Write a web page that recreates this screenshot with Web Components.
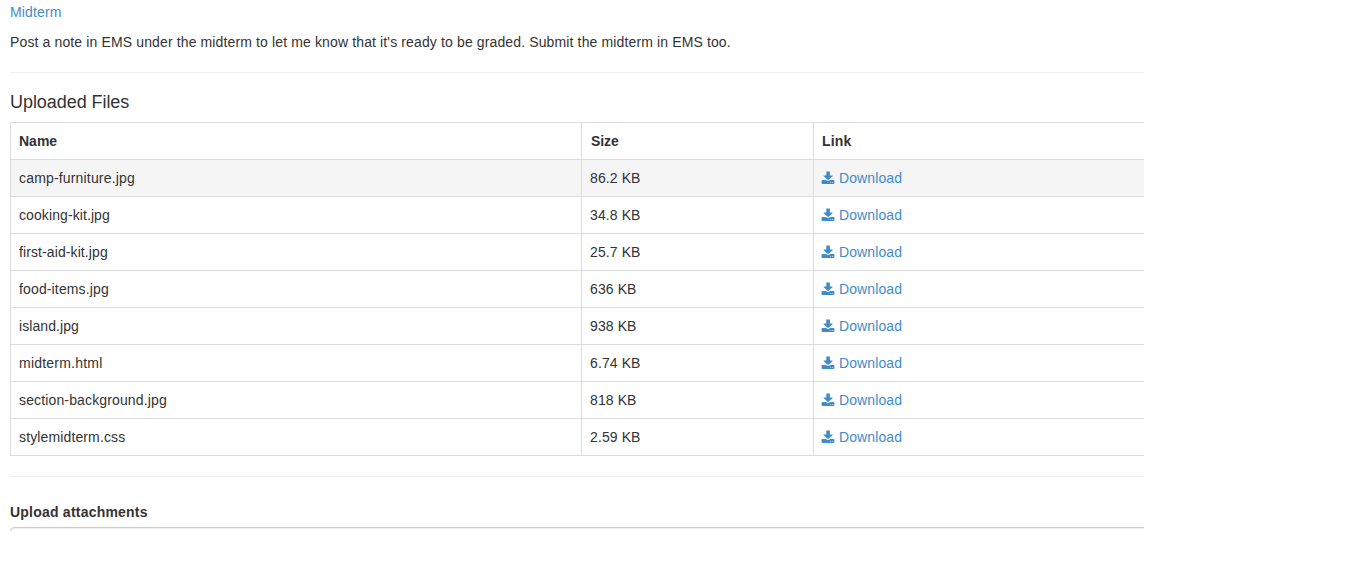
<!DOCTYPE html>
<html lang="en">
<head>
<meta charset="utf-8">
<title>Midterm</title>
<style>
html { background: #fff; }
body { margin: 0; font: 14px/20px "Liberation Sans", Arial, sans-serif; color: #333; }
</style>
</head>
<body>
<submission-page>
  <a slot="title">Midterm</a>
  <span slot="note">Post a note in EMS under the midterm to let me know that it's ready to be graded. Submit the midterm in EMS too.</span>
  <file-table>
    <file-row name="camp-furniture.jpg" size="86.2 KB" style="--tracking:.17px" active></file-row>
    <file-row name="cooking-kit.jpg" size="34.8 KB" style="--tracking:.09px"></file-row>
    <file-row name="first-aid-kit.jpg" size="25.7 KB" style="--tracking:.1px"></file-row>
    <file-row name="food-items.jpg" size="636 KB" style="--tracking:.14px"></file-row>
    <file-row name="island.jpg" size="938 KB" style="--tracking:.08px"></file-row>
    <file-row name="midterm.html" size="6.74 KB" style="--tracking:.22px"></file-row>
    <file-row name="section-background.jpg" size="818 KB" style="--tracking:.14px"></file-row>
    <file-row name="stylemidterm.css" size="2.59 KB" style="--tracking:.13px"></file-row>
  </file-table>
  <upload-field slot="upload">Upload attachments</upload-field>
</submission-page>
<script>
class Base extends HTMLElement {
  render(html) { this.attachShadow({ mode: 'open' }).innerHTML = html; }
}
customElements.define('submission-page', class extends Base {
  connectedCallback() {
    this.render(`<style>
      :host { display: block; width: 1134px; padding: 2px 0 0 10px; overflow: hidden; }
      .title { color: #428bca; letter-spacing: .15px; }
      p { margin: 10px 0 20px; letter-spacing: .131px; }
      hr { margin: 0; border: 0; border-top: 1px solid #eee; }
      h4 { margin: 19px 0 10px; font-size: 18px; line-height: 20px; font-weight: 400; letter-spacing: -.06px; }
      .end { margin: 20px 0 25px; }
    </style>
    <div class="title"><slot name="title"></slot></div>
    <p><slot name="note"></slot></p>
    <hr>
    <h4>Uploaded Files</h4>
    <slot></slot>
    <hr class="end">
    <slot name="upload"></slot>`);
  }
});
customElements.define('file-table', class extends Base {
  connectedCallback() {
    this.render(`<style>
      :host { display: block; border: solid #ddd; border-width: 1px 0 0 1px; }
      .head { display: grid; grid-template-columns: 571px 232px 1fr; font-weight: 700; border-bottom: 1px solid #ddd; }
      .head span { padding: 8px; }
      .head span:nth-child(2) { padding-left: 9px; letter-spacing: -.1px; }
      .head span:last-child { letter-spacing: .2px; }
      .head span:not(:last-child) { border-right: 1px solid #ddd; box-sizing: border-box; }
    </style>
    <div class="head"><span>Name</span><span>Size</span><span>Link</span></div>
    <slot></slot>`);
  }
});
customElements.define('file-row', class extends Base {
  connectedCallback() {
    this.render(`<style>
      :host { display: grid; grid-template-columns: 571px 232px 1fr; border-bottom: 1px solid #ddd; }
      :host([active]) { background: #f5f5f5; }
      span { padding: 8px; box-sizing: border-box; letter-spacing: .1px; }
      span:first-of-type { letter-spacing: var(--tracking, 0); }
      span:not(:last-child) { border-right: 1px solid #ddd; }
      .link { display: flex; align-items: center; gap: 4px; color: #428bca; }
      svg { width: 14px; height: 14px; margin: 0 0 1px -1px; fill: currentColor; }
    </style>
    <span>${this.getAttribute('name')}</span><span>${this.getAttribute('size')}</span>
    <span class="link"><svg viewBox="0 0 14 14"><path fill-rule="evenodd" d="M5.3 .5h3.6v3.9h2.3q.8.1.3.8L7.6 8.8q-.5.4-1 0L2.7 5.2q-.5-.7.3-.8h2.3zM1.5 9h3.5l.8.6q1.3.9 2.6 0L9.2 9h3.3q.9 0 .9.8v2.5q0 .7-.9.7H1.5q-.9 0-.9-.7V9.8q0-.8.9-.8zM9.3 11.1v.7h.8v-.7zM11.3 11.1v.7h.8v-.7z"/></svg><a>Download</a></span>`);
  }
});
customElements.define('upload-field', class extends Base {
  connectedCallback() {
    this.render(`<style>
      :host { display: block; }
      label { display: block; font-weight: 700; letter-spacing: .22px; }
      .clip { height: 4px; margin-top: 5px; overflow: hidden; }
      .box { height: 34px; width: 1160px; box-sizing: border-box; border: 1px solid #ccc; border-radius: 4px; box-shadow: inset 0 1px 1px rgba(0,0,0,.075); }
    </style>
    <label><slot></slot></label>
    <div class="clip"><div class="box"></div></div>`);
  }
});
</script>
</body>
</html>
